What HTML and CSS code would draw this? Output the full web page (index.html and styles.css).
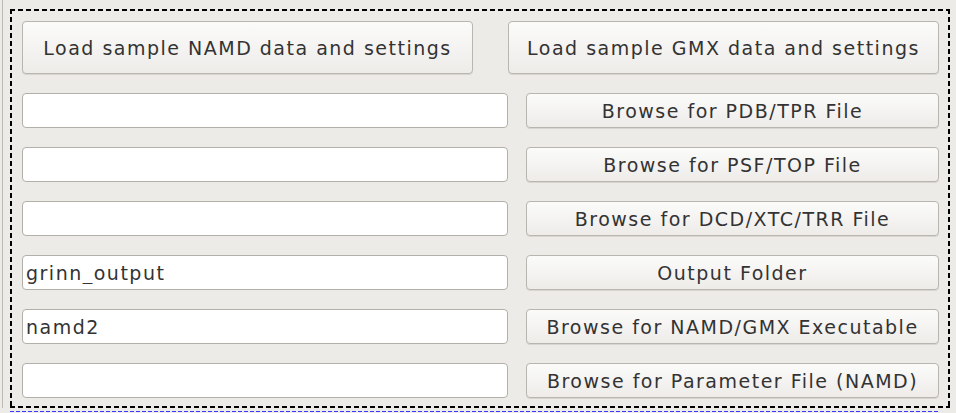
FILE: index.html
```html
<!DOCTYPE html>
<html>
<head>
<meta charset="utf-8">
<link rel="stylesheet" href="styles.css">
</head>
<body>
<div class="frame">
  <div class="panel">
    <div class="row top">
      <button class="btn big">Load sample NAMD data and settings</button>
      <button class="btn big">Load sample GMX data and settings</button>
    </div>
    <div class="row">
      <input class="field" type="text" value="">
      <button class="btn">Browse for PDB/TPR File</button>
    </div>
    <div class="row">
      <input class="field" type="text" value="">
      <button class="btn">Browse for PSF/TOP File</button>
    </div>
    <div class="row">
      <input class="field" type="text" value="">
      <button class="btn">Browse for DCD/XTC/TRR File</button>
    </div>
    <div class="row">
      <input class="field" type="text" value="grinn_output">
      <button class="btn">Output Folder</button>
    </div>
    <div class="row">
      <input class="field" type="text" value="namd2">
      <button class="btn">Browse for NAMD/GMX Executable</button>
    </div>
    <div class="row">
      <input class="field" type="text" value="">
      <button class="btn">Browse for Parameter File (NAMD)</button>
    </div>
  </div>
  <div class="focusline"></div>
</div>
</body>
</html>
```
FILE: styles.css
```css
html, body {
  margin: 0;
  padding: 0;
  background: #edebe8;
  width: 956px;
  height: 413px;
  overflow: hidden;
  font-family: "DejaVu Sans", sans-serif;
}
.frame {
  margin-left: 2px;
  border-left: 1px solid #bdb9b3;
  padding: 9px 0 0 7px;
  height: 399px;
}
.panel {
  width: 940px;
  height: 399px;
  box-sizing: border-box;
  padding: 12px 11px 9px 12px;
  display: flex;
  flex-direction: column;
  gap: 19px;
  background:
    repeating-linear-gradient(90deg, #000 0 5px, transparent 5px 8px) top left / 100% 2px no-repeat,
    repeating-linear-gradient(90deg, #000 0 5px, transparent 5px 8px) bottom left / 100% 2px no-repeat,
    repeating-linear-gradient(180deg, #000 0 5px, transparent 5px 8px) top left / 2px 100% no-repeat,
    repeating-linear-gradient(180deg, #000 0 5px, transparent 5px 8px) top right / 2px 100% no-repeat;
}
.focusline {
  width: 930px;
  height: 1px;
  margin-top: 3px;
  background: repeating-linear-gradient(90deg, #3a3aff 0 4px, transparent 4px 6px);
}
.row {
  display: grid;
  grid-template-columns: 486px 413px;
  justify-content: space-between;
  height: 35px;
}
.row.top {
  grid-template-columns: 451px 431px;
  height: 53px;
}
.btn {
  font-family: "DejaVu Sans", sans-serif;
  font-size: 19px;
  letter-spacing: 1.5px;
  color: #333;
  border: 1px solid #b9b5af;
  border-radius: 4px;
  background: linear-gradient(#fbfbfa, #eeece9);
  box-shadow: 0 1px 0 #d8d4cf;
  padding: 0;
  margin: 0;
}
.field {
  font-family: "DejaVu Sans", sans-serif;
  font-size: 19px;
  letter-spacing: 1.5px;
  color: #333;
  border: 1px solid #b3afa9;
  border-radius: 4px;
  background: #fff;
  padding: 0 0 0 3px;
  margin: 0;
  box-sizing: border-box;
  height: 35px;
  outline: none;
}
```
